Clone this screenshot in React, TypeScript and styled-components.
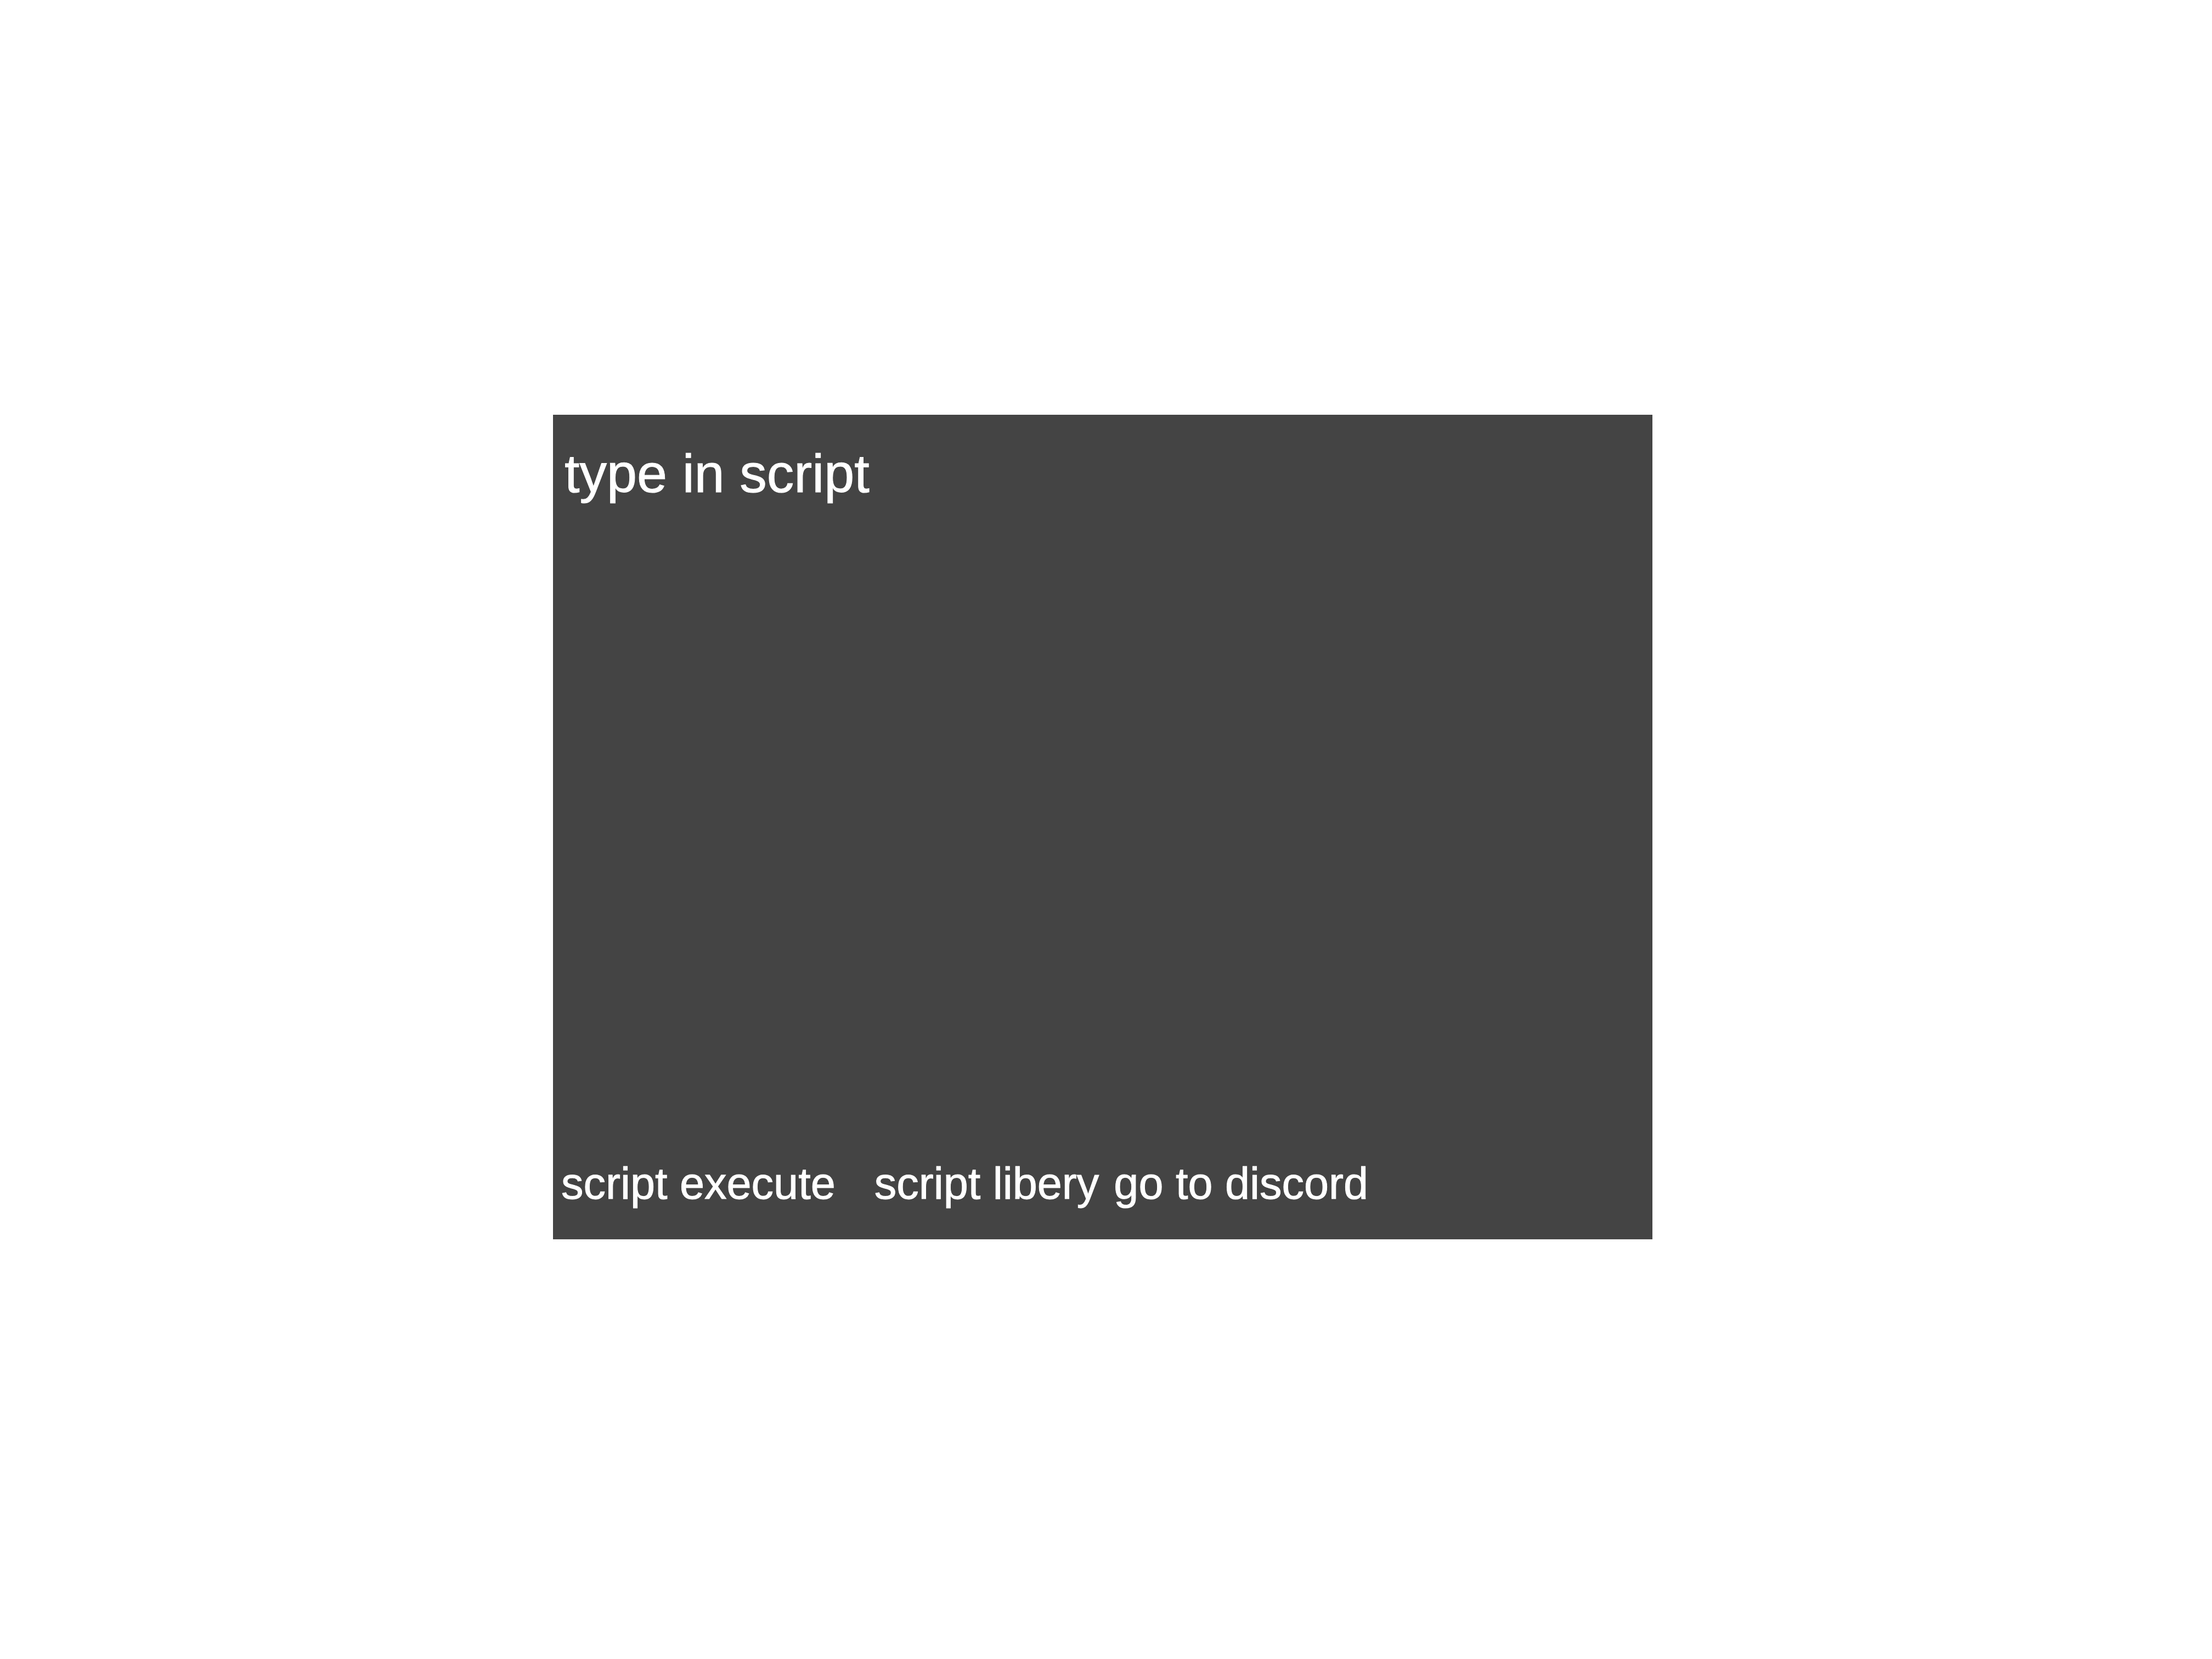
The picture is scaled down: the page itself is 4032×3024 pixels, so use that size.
import React, { useState } from "react";
import styled, { createGlobalStyle } from "styled-components";

const GlobalStyle = createGlobalStyle`
  body {
    margin: 0;
    background: #ffffff;
    font-family: "Liberation Sans", Arial, Helvetica, sans-serif;
  }
`;

const Page = styled.main`
  box-sizing: border-box;
  display: flex;
  min-height: 100vh;
  padding: 25vh calc(25vw + 12px) calc(25vh + 9px) 25vw;
`;

const Panel = styled.form`
  box-sizing: border-box;
  flex: 1;
  min-width: 0;
  display: flex;
  flex-direction: column;
  padding: 51px 15px 56px;
  background: #444444;
  -webkit-text-stroke: 1px #ffffff;
`;

const ScriptInput = styled.textarea`
  flex: 1;
  margin: 0;
  padding: 0 6px;
  border: 0;
  outline: 0;
  resize: none;
  background: transparent;
  color: #ffffff;
  font-family: inherit;
  font-size: 99px;
  line-height: 112px;

  &::placeholder {
    color: #ffffff;
    opacity: 1;
  }
`;

const Actions = styled.div`
  display: flex;
  align-items: center;
  gap: 27px;
`;

const ActionButton = styled.button<{ $wide?: boolean }>`
  margin: 0;
  padding: 0;
  padding-right: ${({ $wide }) => ($wide ? "44px" : "0")};
  border: 0;
  background: transparent;
  color: #ffffff;
  font-family: inherit;
  font-size: 81px;
  line-height: 92px;
  text-align: left;
  white-space: nowrap;
  cursor: pointer;
`;

export default function App() {
  const [script, setScript] = useState("");

  return (
    <>
      <GlobalStyle />
      <Page>
        <Panel onSubmit={(event) => event.preventDefault()}>
          <ScriptInput
            aria-label="type in script"
            placeholder="type in script"
            spellCheck={false}
            value={script}
            onChange={(event) => setScript(event.target.value)}
          />
          <Actions>
            <ActionButton type="submit" $wide>
              script execute
            </ActionButton>
            <ActionButton type="button">script libery</ActionButton>
            <ActionButton type="button">go to discord</ActionButton>
          </Actions>
        </Panel>
      </Page>
    </>
  );
}
